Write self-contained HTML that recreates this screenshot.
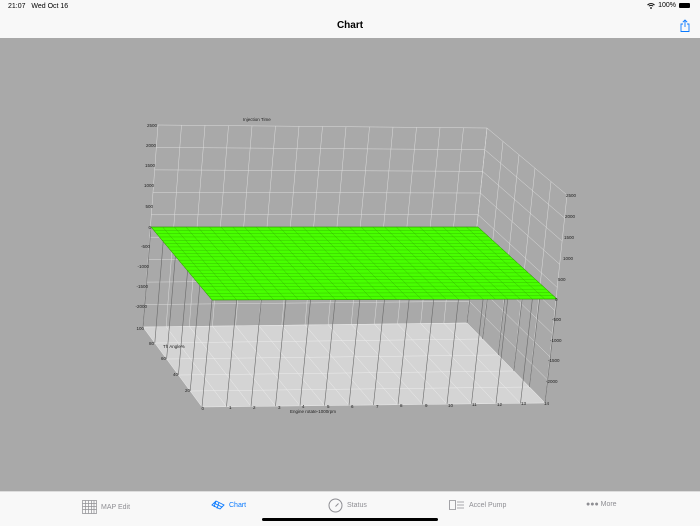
<!DOCTYPE html>
<html><head><meta charset="utf-8"><style>
html,body{margin:0;padding:0;width:700px;height:525px;overflow:hidden;background:#a9a9a9;font-family:"Liberation Sans",sans-serif}
#status{position:absolute;left:0;top:0;width:700px;height:14px;background:#f8f8f8;font-size:7px;color:#000}
#nav{position:absolute;left:0;top:14px;width:700px;height:24px;background:#f8f8f8;text-align:center;font-size:10px;font-weight:bold;line-height:24px}
#tab{position:absolute;left:0;top:491px;width:700px;height:34px;background:#f8f8f8;border-top:1px solid #ddd;font-size:7px;color:#8e8e93}
.t{position:absolute;top:8px;display:flex;align-items:center;gap:4px}
svg text{font-family:"Liberation Sans",sans-serif;font-size:4.5px;fill:#222}
</style></head><body>
<div id="status"><span style="position:absolute;left:8px;top:3px">21:07&nbsp;&nbsp;&nbsp;Wed Oct 16</span>
<span style="position:absolute;right:10px;top:2px;display:flex;align-items:center;gap:3px"><svg width="8" height="6" viewBox="0 0 8 6"><path d="M0.5 2A5 5 0 0 1 7.5 2M1.8 3.2A3.2 3.2 0 0 1 6.2 3.2" stroke="#000" stroke-width="0.9" fill="none"/><circle cx="4" cy="5" r="0.9"/></svg>100% <span style="display:inline-block;width:11px;height:5px;background:#000;border-radius:1px"></span></span></div>
<div id="nav">Chart
<svg style="position:absolute;right:10px;top:5px" width="10" height="13" viewBox="0 0 10 13"><path d="M3 5H1v7.5h8V5H7M5 8V1M2.8 3.2L5 1l2.2 2.2" stroke="#0a7aff" stroke-width="0.9" fill="none"/></svg></div>
<svg id="ch" style="position:absolute;left:0;top:0" width="700" height="525" viewBox="0 0 700 525">
<g id="g"></g>
<text x="243" y="121">Injection Time</text>
<g text-anchor="end">
<text x="157" y="127">2500</text><text x="156" y="147">2000</text><text x="155" y="167">1500</text><text x="154" y="187">1000</text><text x="153" y="208">500</text><text x="151" y="229">0</text><text x="150" y="248">-500</text><text x="149" y="268">-1000</text><text x="148" y="288">-1500</text><text x="147" y="308">-2000</text>
<text x="144" y="330">100</text><text x="154" y="345">80</text><text x="166" y="360">60</text><text x="178" y="376">40</text><text x="190" y="392">20</text><text x="204" y="410">0</text>
</g>
<text x="566" y="197">2500</text><text x="565" y="218">2000</text><text x="564" y="239">1500</text><text x="563" y="260">1000</text><text x="558" y="281">500</text><text x="555" y="301">0</text><text x="552" y="321">-500</text><text x="550" y="342">-1000</text><text x="548" y="362">-1500</text><text x="546" y="383">-2000</text>
<g id="xl"><text x="229" y="409">1</text><text x="253" y="409">2</text><text x="278" y="409">3</text><text x="302" y="408">4</text><text x="327" y="408">5</text><text x="351" y="408">6</text><text x="376" y="408">7</text><text x="400" y="407">8</text><text x="425" y="407">9</text><text x="448" y="407">10</text><text x="472" y="406">11</text><text x="497" y="406">12</text><text x="521" y="405">13</text><text x="544" y="405">14</text></g>
<text x="290" y="413">Engine rotate-1000rpm</text>
<text x="163" y="348">Th Angle%</text>
</svg>
<div id="tab">
<div class="t" style="left:82px"><svg width="15" height="14" viewBox="0 0 15 14"><path d="M.5 .5h14v13H.5zM.5 3.5h14M.5 6.5h14M.5 9.5h14M3.5 .5v13M6.5 .5v13M9.5 .5v13M12 .5v13" stroke="#8e8e93" stroke-width=".7" fill="none"/></svg>MAP Edit</div>
<div class="t" style="left:211px;color:#0a7aff"><svg width="14" height="10" viewBox="0 0 14 10"><path d="M1 5L5 1l8 4-4 4zM3 3l8 4M5 1l-2 6M8 2.5l-2 6" stroke="#0a7aff" stroke-width=".9" fill="none"/></svg>Chart</div>
<div class="t" style="left:328px;top:6px"><svg width="15" height="15" viewBox="0 0 15 15"><circle cx="7.5" cy="7.5" r="6.5" stroke="#8e8e93" fill="none"/><path d="M7.5 8.5l3-3" stroke="#8e8e93"/></svg>Status</div>
<div class="t" style="left:449px"><svg width="16" height="10" viewBox="0 0 16 10"><path d="M.5 .5h6v9h-6zM8 2h7M8 5h7M8 8h7" stroke="#8e8e93" stroke-width=".8" fill="none"/></svg>Accel Pump</div>
<div class="t" style="left:586px;top:9px">●●● More</div>
<div style="position:absolute;left:262px;top:26px;width:176px;height:3px;border-radius:2px;background:#000"></div>
</div>
<script>
var g=document.getElementById('g'),s='';
function L(a,b,c,w){s+='<line x1="'+a[0]+'" y1="'+a[1]+'" x2="'+b[0]+'" y2="'+b[1]+'" stroke="'+c+'" stroke-width="'+(w||0.6)+'"/>';}
function P(p,f,st){s+='<polygon points="'+p.map(q=>q.join(',')).join(' ')+'" fill="'+f+'"'+(st?' stroke="'+st+'" stroke-width="0.5"':'')+'/>';}
function lerp(a,b,t){return [a[0]+(b[0]-a[0])*t,a[1]+(b[1]-a[1])*t];}
function bl(q,u,v){return lerp(lerp(q[0],q[1],u),lerp(q[3],q[2],u),v);}
function grid(q,nu,nv,c,w){for(var i=0;i<=nu;i++)L(bl(q,i/nu,0),bl(q,i/nu,1),c,w);for(var j=0;j<=nv;j++)L(bl(q,0,j/nv),bl(q,1,j/nv),c,w);}
var bw=[[158,125],[487,128],[467,323],[143,327]];
var rw=[[487,128],[567,195],[545,403],[467,323]];
var fl=[[143,327],[467,323],[545,403],[202,407]];
P(fl,'#d4d4d4');
grid(bw,14,9,'#dcdcdc',0.5);
grid(rw,5,9,'#dcdcdc',0.5);
grid(fl,14,5,'#ececec',0.5);
var sf=[[151,227],[478,227],[557,299],[212,300]];
for(var i=0;i<=14;i++)L(bl(sf,i/14,1),bl(fl,i/14,1),'#6a6a6a',0.6);
for(var j=0;j<5;j++){L(bl(sf,0,j/5),bl(fl,0,j/5),'#6a6a6a',0.6);L(bl(sf,1,j/5),bl(fl,1,j/5),'#6a6a6a',0.6);}
P(sf,'#48ff00','#2d8a00');
grid(sf,28,22,'#30a800',0.35);
g.innerHTML=s;
</script>
</body></html>
